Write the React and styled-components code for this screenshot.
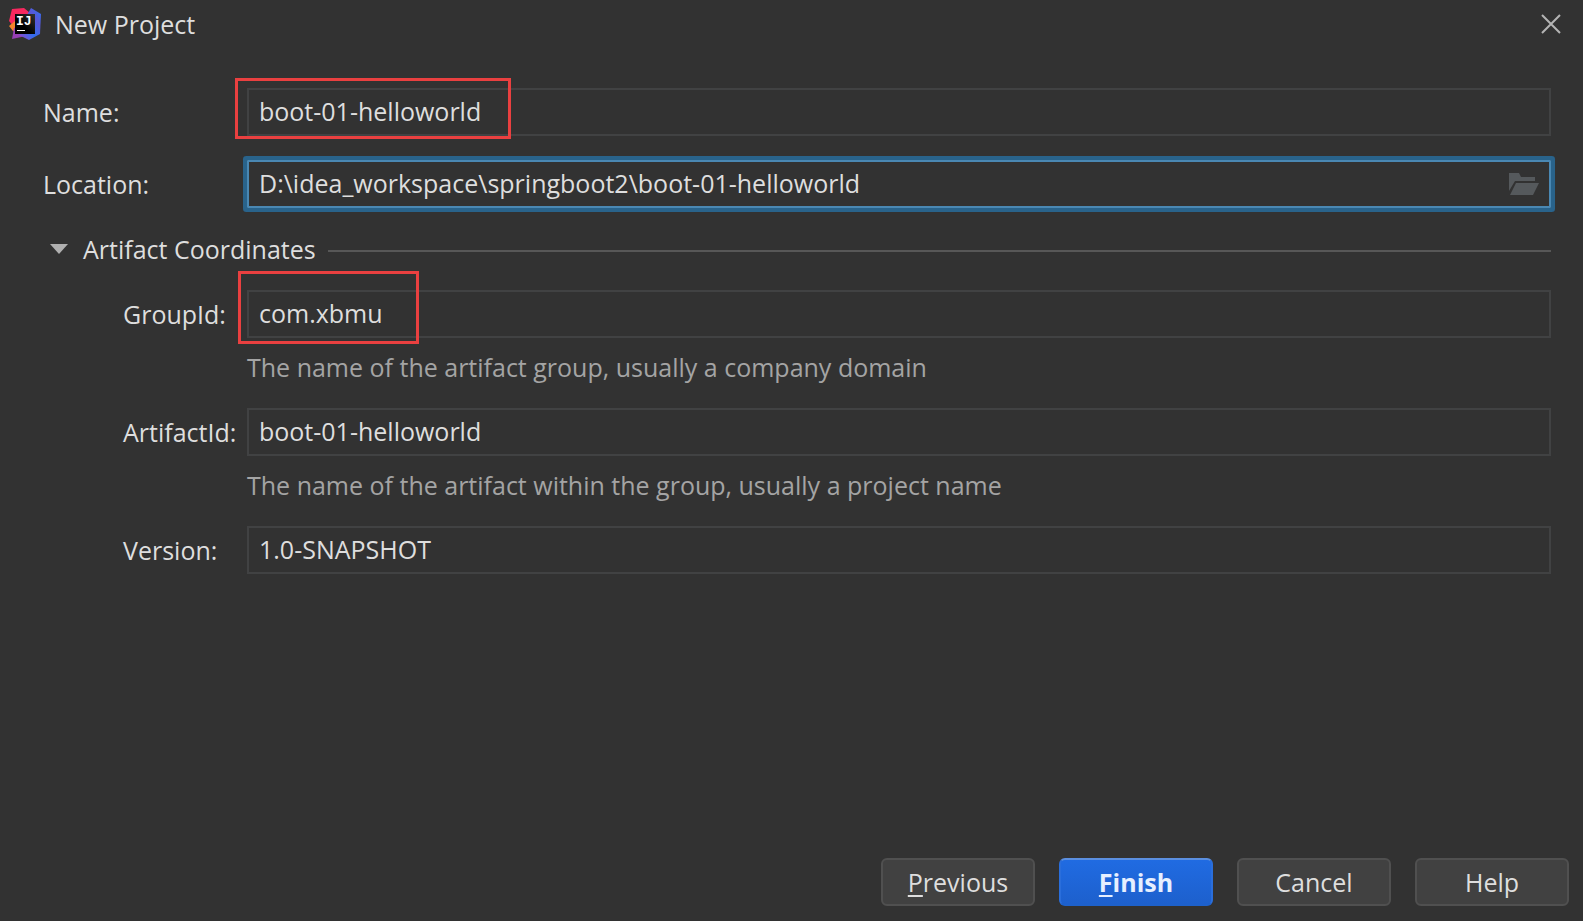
import { useState } from "react";
import styled, { createGlobalStyle, css } from "styled-components";

const GlobalStyle = createGlobalStyle`
  * {
    box-sizing: border-box;
  }
  body {
    margin: 0;
    background: #323232;
    color: #dedede;
    font-family: "Open Sans", "Noto Sans", sans-serif;
    font-size: 25px;
    line-height: 34px;
  }
`;

const Dialog = styled.form`
  display: flex;
  flex-direction: column;
  min-height: 100vh;
`;

const TitleBar = styled.header`
  display: flex;
  align-items: center;
  gap: 14px;
  height: 48px;
  padding: 0 22px 0 9px;

  h1 {
    flex: 1;
    margin: 0;
    font-size: 25px;
    font-weight: normal;
  }
`;

const CloseButton = styled.button`
  display: flex;
  padding: 0;
  border: none;
  background: none;
  color: #b4b4b4;
`;

const Fields = styled.main`
  display: flex;
  flex-direction: column;
  flex: 1;
  gap: 24px;
  padding: 40px 32px 24px 43px;
`;

const Group = styled.section`
  display: flex;
  flex-direction: column;
  gap: 24px;
  padding-left: 80px;
`;

const Row = styled.div`
  display: grid;
  grid-template-columns: ${({ $nested }) => ($nested ? "124px" : "204px")} 1fr;
  align-items: center;
  row-gap: 12px;
`;

const Label = styled.label`
  white-space: nowrap;
`;

const InputBox = styled.div`
  position: relative;
  display: flex;
  align-items: center;
  height: 48px;
  padding-right: 10px;
  border: 2px solid #414243;
  ${({ $active }) =>
    $active &&
    css`
      border-color: #4a88b3;
      border-radius: 1px;
      box-shadow: 0 0 0 4px #29638b;
    `}
`;

const Input = styled.input`
  flex: 1;
  min-width: 0;
  padding: 0 10px 2px;
  border: none;
  outline: none;
  background: transparent;
  color: inherit;
  font: inherit;
`;

const BrowseButton = styled(CloseButton)`
  color: #55595c;
`;

const Hint = styled.p`
  grid-column: 2;
  margin: 0;
  color: #a4a4a4;
`;

const Highlight = styled.span`
  position: absolute;
  inset: ${({ $inset }) => $inset};
  width: ${({ $width }) => $width};
  border: 3px solid #ea4040;
  pointer-events: none;
`;

const Disclosure = styled.button`
  display: flex;
  align-items: center;
  gap: 12px;
  padding: 0 0 0 7px;
  border: none;
  background: none;
  color: inherit;
  font: inherit;
  text-align: left;

  svg {
    margin-right: 3px;
  }

  &::after {
    content: "";
    flex: 1;
    height: 2px;
    margin-top: 4px;
    background: #575757;
  }
`;

const Actions = styled.footer`
  display: flex;
  justify-content: flex-end;
  gap: 24px;
  padding: 0 14px 15px;
`;

const Button = styled.button`
  width: 154px;
  height: 48px;
  padding: 0;
  border: 2px solid #505050;
  border-radius: 6px;
  background: #414141;
  color: inherit;
  font: inherit;

  u {
    text-decoration-thickness: 2px;
    text-underline-offset: 3px;
    text-decoration-skip-ink: none;
  }

  ${({ $primary }) =>
    $primary &&
    css`
      border-color: #5b8fe0 #2a6edb #1d61cc;
      background: #1f66dc linear-gradient(#206be2, #1d60cd);
      color: #e6efff;
      font-weight: bold;
    `}
`;

const Logo = () => (
  <svg width="32" height="32" viewBox="0 0 32 32" aria-hidden="true">
    <defs>
      <linearGradient id="blue" x1="0" y1="1" x2="1" y2="0">
        <stop offset="0" stopColor="#9a45c8" />
        <stop offset="0.4" stopColor="#2f6df0" />
        <stop offset="0.7" stopColor="#5956d6" />
        <stop offset="1" stopColor="#2d74f4" />
      </linearGradient>
      <linearGradient id="tile" x1="0" y1="1" x2="1" y2="0">
        <stop offset="0.4" stopColor="#000" />
        <stop offset="1" stopColor="#343434" />
      </linearGradient>
    </defs>
    <path d="M3 1 15 0 21 5 17 18 6 20 0 13Z" fill="#f7285f" />
    <path d="M0 18 6 13 9 24 4 23Z" fill="#f5832a" />
    <path d="M5 20 10 18 17 28 3 31Z" fill="#963fb4" />
    <path d="M22 0 32 6 31 26 20 32 10 27 18 7Z" fill="url(#blue)" />
    <path d="M6 6h20v20H6z" fill="url(#tile)" />
    <text
      x="7"
      y="17"
      fill="#fff"
      fontFamily="Liberation Mono, monospace"
      fontSize="13"
      fontWeight="bold"
    >
      IJ
    </text>
    <path d="M8 22h8v1H8z" fill="#fff" />
  </svg>
);

const CloseIcon = () => (
  <svg width="20" height="20" viewBox="0 0 20 20" aria-hidden="true">
    <path d="M1 1 19 19M19 1 1 19" stroke="currentColor" strokeWidth="2" />
  </svg>
);

const FolderIcon = () => (
  <svg width="30" height="22" viewBox="0 0 30 22" aria-hidden="true">
    <path d="M0 0h10l2 4h14v4H6L0 18Z" fill="currentColor" />
    <path d="M7 10h23l-6 12H1Z" fill="currentColor" />
  </svg>
);

const Arrow = () => (
  <svg width="18" height="10" viewBox="0 0 18 10" aria-hidden="true">
    <path d="M0 0h18L9 10Z" fill="#b0b0b0" />
  </svg>
);

const Field = ({ id, label, value, hint, nested, active, children }) => (
  <Row $nested={nested}>
    <Label htmlFor={id}>{label}</Label>
    <InputBox $active={active}>
      <Input id={id} defaultValue={value} spellCheck={false} />
      {children}
    </InputBox>
    {hint && <Hint>{hint}</Hint>}
  </Row>
);

const App = () => {
  const [open, setOpen] = useState(true);

  return (
    <Dialog onSubmit={(e) => e.preventDefault()}>
      <GlobalStyle />
      <TitleBar>
        <Logo />
        <h1>New Project</h1>
        <CloseButton type="button" aria-label="Close">
          <CloseIcon />
        </CloseButton>
      </TitleBar>
      <Fields>
        <Field id="name" label="Name:" value="boot-01-helloworld">
          <Highlight $inset="-12px auto -5px -14px" $width="276px" />
        </Field>
        <Field
          id="location"
          label="Location:"
          value="D:\idea_workspace\springboot2\boot-01-helloworld"
          active
        >
          <BrowseButton type="button" aria-label="Browse">
            <FolderIcon />
          </BrowseButton>
        </Field>
        <Disclosure
          type="button"
          aria-expanded={open}
          onClick={() => setOpen(!open)}
        >
          <Arrow />
          Artifact Coordinates
        </Disclosure>
        {open && (
          <Group>
            <Field
              id="groupId"
              label="GroupId:"
              value="com.xbmu"
              hint="The name of the artifact group, usually a company domain"
              nested
            >
              <Highlight $inset="-21px auto -8px -11px" $width="181px" />
            </Field>
            <Field
              id="artifactId"
              label="ArtifactId:"
              value="boot-01-helloworld"
              hint="The name of the artifact within the group, usually a project name"
              nested
            />
            <Field
              id="version"
              label="Version:"
              value="1.0-SNAPSHOT"
              nested
            />
          </Group>
        )}
      </Fields>
      <Actions>
        <Button type="button">
          <u>P</u>revious
        </Button>
        <Button type="submit" $primary>
          <u>F</u>inish
        </Button>
        <Button type="button">Cancel</Button>
        <Button type="button">Help</Button>
      </Actions>
    </Dialog>
  );
};

export default App;
